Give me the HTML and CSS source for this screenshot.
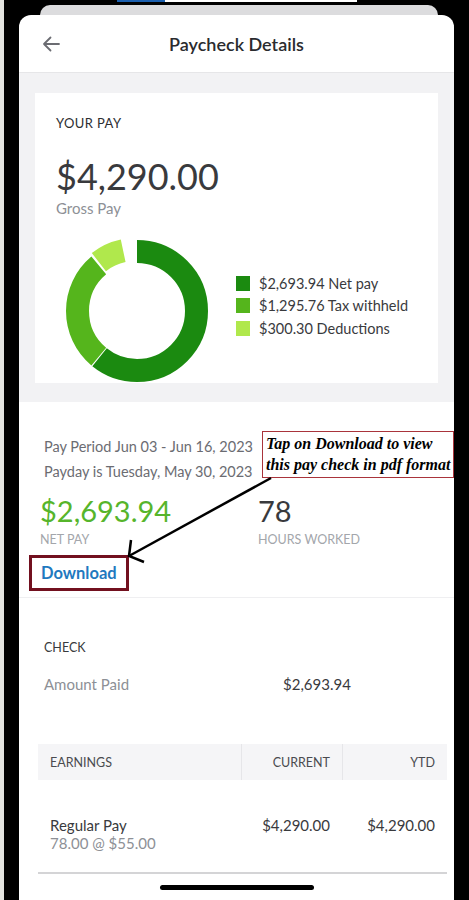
FILE: index.html
```html
<!DOCTYPE html>
<html lang="en">
<head>
    <meta charset="UTF-8">
    <meta name="viewport" content="width=device-width, initial-scale=1.0">
    <title>Paycheck Details</title>
    <link rel="stylesheet" href="styles.css">
</head>
<body>
    <div class="screen">
        <div class="status-strip"><span class="strip-blue"></span><span class="strip-white"></span></div>
        <div class="back-card"></div>

        <div class="sheet">
            <div class="header">
                <svg class="back-arrow" width="18" height="16" viewBox="0 0 18 16">
                    <path d="M17 8H2M8.5 1.5L2 8l6.5 6.5" fill="none" stroke="#6b6c72" stroke-width="1.8" stroke-linecap="round" stroke-linejoin="round"/>
                </svg>
                <h1>Paycheck Details</h1>
            </div>

            <div class="pay-summary">
                <div class="pay-card">
                    <div class="card-label">YOUR PAY</div>
                    <div class="gross-amount">$4,290.00</div>
                    <div class="gross-label">Gross Pay</div>

                    <div class="chart-row">
                        <svg class="donut" width="144" height="144" viewBox="0 0 144 144">
                            <g transform="rotate(-90 72 72)">
                                <circle cx="72" cy="72" r="59.5" pathLength="360" fill="none" stroke="#1b8a10" stroke-width="23" stroke-dasharray="219 141"/>
                                <circle cx="72" cy="72" r="59.5" pathLength="360" fill="none" stroke="#55b51c" stroke-width="23" stroke-dasharray="100 260" stroke-dashoffset="-220"/>
                            </g>
                            <g transform="translate(-1.5 -2) rotate(-90 72 72)">
                                <circle cx="72" cy="72" r="59.5" pathLength="360" fill="none" stroke="#b0e84c" stroke-width="23" stroke-dasharray="26 334" stroke-dashoffset="-322"/>
                            </g>
                        </svg>
                        <ul class="legend">
                            <li><span class="swatch net"></span>$2,693.94 Net pay</li>
                            <li><span class="swatch tax"></span>$1,295.76 Tax withheld</li>
                            <li><span class="swatch ded"></span>$300.30 Deductions</li>
                        </ul>
                    </div>
                </div>
            </div>

            <div class="details">
                <div class="period">Pay Period Jun 03 - Jun 16, 2023</div>
                <div class="period">Payday is Tuesday, May 30, 2023</div>

                <div class="totals">
                    <div class="total">
                        <div class="total-value green">$2,693.94</div>
                        <div class="total-label">NET PAY</div>
                    </div>
                    <div class="total">
                        <div class="total-value">78</div>
                        <div class="total-label">HOURS WORKED</div>
                    </div>
                </div>

                <a class="download" href="#">Download</a>

                <!-- callout pointing at the download link -->
                <div class="callout">Tap on Download to view this pay check in pdf format</div>
                <svg class="callout-arrow" width="160" height="100" viewBox="0 0 160 100">
                    <path d="M151 3L9 81" stroke="#000" stroke-width="2.5" fill="none"/>
                    <path d="M11 65L9 81L24 87" stroke="#000" stroke-width="2.5" fill="none"/>
                </svg>
            </div>

            <div class="check">
                <div class="section-title">CHECK</div>
                <div class="check-row">
                    <span class="muted">Amount Paid</span>
                    <span>$2,693.94</span>
                </div>
            </div>

            <div class="earnings">
                <div class="earn-head">
                    <div>EARNINGS</div>
                    <div class="num">CURRENT</div>
                    <div class="num">YTD</div>
                </div>
                <div class="earn-row">
                    <div>
                        Regular Pay
                        <div class="muted">78.00 @ $55.00</div>
                    </div>
                    <div class="num">$4,290.00</div>
                    <div class="num">$4,290.00</div>
                </div>
            </div>

            <div class="home-bar"></div>
        </div>
    </div>
</body>
</html>
```

FILE: styles.css
```css
body {
    margin: 0;
    background: #000;
    font-family: 'Lato', 'Open Sans', sans-serif;
    color: #393a3d;
}
.screen {
    width: 469px;
    height: 900px;
    overflow: hidden;
    border-left: 4px solid #e4e4e0;
    box-sizing: border-box;
}
.status-strip {
    display: flex;
    height: 2px;
    margin-left: 113px;
}
.strip-blue {
    width: 48px;
    background: #1b5fae;
}
.strip-white {
    width: 192px;
    background: #fff;
}
.back-card {
    height: 10px;
    margin: 3px 31px 0 36px;
    background: #dcdcde;
    border-radius: 12px 12px 0 0;
}
.sheet {
    width: 435px;
    height: 885px;
    margin-left: 15px;
    background: #fff;
    border-radius: 12px 12px 0 0;
    position: relative;
}

/* top bar */
.header {
    height: 57px;
    display: flex;
    align-items: center;
    justify-content: center;
    position: relative;
    border-bottom: 1px solid #e6e6e8;
}
.back-arrow {
    position: absolute;
    left: 23px;
    top: 21px;
}
.header h1 {
    margin: 0;
    font-size: 18px;
    font-weight: 600;
    color: #2a2b2e;
}

/* your pay card */
.pay-summary {
    background: #f2f2f4;
    padding: 20px 16px 19px;
}
.pay-card {
    background: #fff;
    padding: 22px 21px 0;
    height: 268px;
}
.card-label {
    font-size: 13px;
    line-height: 16px;
    letter-spacing: 0.4px;
    color: #2d2e31;
}
.gross-amount {
    margin-top: 24px;
    font-size: 36px;
    line-height: 42px;
    color: #393a3d;
}
.gross-label {
    margin-top: 1px;
    font-size: 15px;
    color: #8d9096;
    line-height: 20px;
}
.chart-row {
    display: flex;
    align-items: center;
    margin: 21px 0 0 9px;
}
.legend {
    list-style: none;
    margin: 0 0 11px 27px;
    padding: 0;
    font-size: 14.5px;
}
.legend li {
    display: flex;
    align-items: center;
    height: 22.5px;
}
.swatch {
    width: 14px;
    height: 15px;
    margin-right: 9px;
}
.swatch.net { background: #1b8a10; }
.swatch.tax { background: #55b51c; }
.swatch.ded { background: #b0e84c; }

/* pay period and totals */
.details {
    position: relative;
    padding: 32px 0 6px 25px;
    border-bottom: 1px solid #efeff1;
}
.period {
    font-size: 14.5px;
    line-height: 25px;
    color: #6b6c72;
}
.totals {
    display: flex;
    margin-top: 10px;
}
.total {
    flex: none;
    width: 218px;
}
.total:first-child {
    margin-left: -4px;
}
.total-value {
    font-size: 29px;
    line-height: 34px;
    color: #393a3d;
}
.total-value.green {
    color: #56b52b;
}
.total-label {
    margin-top: 4px;
    font-size: 12.5px;
    color: #a3a6ab;
    line-height: 16px;
}
.download {
    display: inline-block;
    margin: 7px 0 0 -15px;
    padding: 5px 9px;
    border: 3px solid #72101f;
    color: #1f79bf;
    font-size: 16.5px;
    font-weight: 700;
    text-decoration: none;
}
.callout {
    position: absolute;
    left: 243px;
    top: 29px;
    width: 185px;
    padding: 1px 2px 2px 3px;
    border: 1px solid #a9343b;
    background: #fff;
    font-family: 'Liberation Serif', serif;
    font-style: italic;
    font-weight: bold;
    font-size: 16px;
    line-height: 21px;
    color: #000;
}
.callout-arrow {
    position: absolute;
    left: 101px;
    top: 73px;
}

/* check */
.check {
    padding: 42px 0 0 25px;
    height: 104px;
}
.section-title {
    font-size: 12.5px;
    color: #393a3d;
}
.check-row {
    display: flex;
    margin-top: 20px;
    font-size: 15px;
}
.check-row .muted {
    width: 239px;
}
.muted {
    color: #8d9096;
}

/* earnings table */
.earnings {
    margin: 0 7px 0 19px;
    font-size: 15px;
}
.earn-head,
.earn-row {
    display: grid;
    grid-template-columns: 203px 101px 1fr;
}
.earn-head {
    height: 36px;
    background: #f5f5f7;
    font-size: 12.5px;
    color: #4a4b4f;
}
.earn-head > div {
    display: flex;
    align-items: center;
    padding: 0 12px;
}
.earn-head > div + div {
    border-left: 1px solid #e6e6e9;
    justify-content: flex-end;
}
.earn-row {
    padding: 36px 0 20px;
    border-bottom: 2px solid #d4d4d6;
    line-height: 18px;
}
.earn-row > div {
    padding: 0 12px;
}
.earn-row .num {
    text-align: right;
}
.home-bar {
    width: 154px;
    height: 5px;
    border-radius: 3px;
    background: #000;
    margin: 11px auto 0;
}
```
